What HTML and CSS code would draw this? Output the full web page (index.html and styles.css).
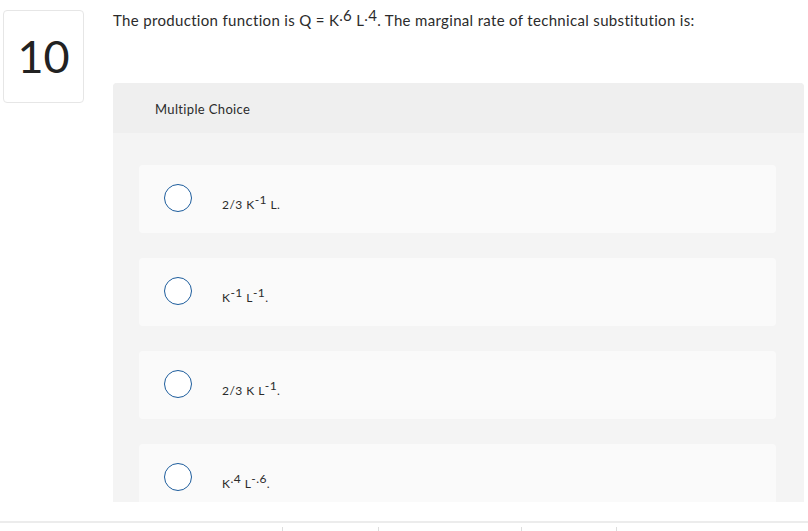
FILE: index.html
```html
<!DOCTYPE html>
<html>
<head>
<meta charset="utf-8">
<link rel="stylesheet" href="styles.css">
</head>
<body>
<div class="page">
  <div class="qnum">10</div>
  <div class="main">
    <p class="question">The production function is Q = K<sup>.6</sup> L<sup>.4</sup>. The marginal rate of technical substitution is:</p>
    <div class="panel">
      <div class="panel-head">Multiple Choice</div>
      <div class="panel-body">
        <div class="option"><span class="radio"></span><span class="opt-text">2/3 K<sup>-1</sup> L.</span></div>
        <div class="option"><span class="radio"></span><span class="opt-text">K<sup>-1</sup> L<sup>-1</sup>.</span></div>
        <div class="option"><span class="radio"></span><span class="opt-text">2/3 K L<sup>-1</sup>.</span></div>
        <div class="option"><span class="radio"></span><span class="opt-text">K<sup>.4</sup> L<sup>-.6</sup>.</span></div>
      </div>
    </div>
  </div>
</div>
<div class="footer">
  <span class="tick t1"></span>
  <span class="tick t2"></span>
  <span class="tick t3"></span>
  <span class="tick t4"></span>
</div>
</body>
</html>
```
FILE: styles.css
```css
html, body {
  margin: 0;
  padding: 0;
  background: #ffffff;
  font-family: Lato, "Open Sans", Arial, sans-serif;
  color: #222222;
  overflow: hidden;
}
.page {
  display: flex;
  align-items: flex-start;
  height: 502px;
  overflow: hidden;
}
.qnum {
  box-sizing: border-box;
  width: 81px;
  height: 93px;
  margin: 10px 0 0 3px;
  border: 1px solid #e6e6e6;
  border-radius: 4px;
  display: flex;
  align-items: center;
  justify-content: center;
  font-size: 45px;
  color: #222;
  padding-bottom: 2px;
}
.main {
  margin-left: 29px;
  width: 691px;
}
.question {
  margin: 0;
  padding-top: 9px;
  font-size: 15px;
  letter-spacing: 0.33px;
  line-height: 22px;
  color: #2b2b2b;
  white-space: nowrap;
}
.question sup {
  font-size: 15px;
  line-height: 0;
  vertical-align: 5px;
}
.panel {
  margin-top: 52px;
  background: #f4f4f4;
  border-radius: 4px 4px 0 0;
  height: 419px;
  overflow: hidden;
}
.panel-head {
  background: #efefef;
  height: 50px;
  box-sizing: border-box;
  padding-left: 42px;
  display: flex;
  align-items: center;
  font-size: 13px;
  letter-spacing: 0.35px;
  color: #2b2b2b;
  padding-top: 1px;
}
.panel-body {
  padding: 32px 28px 0 26px;
  display: flex;
  flex-direction: column;
  gap: 25px;
}
.option {
  background: #fafafa;
  border-radius: 4px;
  height: 68px;
  flex: none;
  display: flex;
  align-items: center;
  padding-left: 25px;
}
.radio {
  box-sizing: border-box;
  width: 28px;
  height: 28px;
  border: 1.5px solid #1c5c9c;
  border-radius: 50%;
  background: #ffffff;
  margin-top: -2px;
  flex: none;
}
.opt-text {
  margin-left: 30px;
  font-size: 12px;
  letter-spacing: 0.45px;
  color: #2b2b2b;
  padding-top: 11px;
}
.opt-text sup {
  font-size: 12px;
  line-height: 0;
  vertical-align: 5px;
}
.footer {
  position: relative;
  height: 29px;
  margin-top: 19px;
  border-top: 2px solid #ececec;
}
.tick {
  position: absolute;
  top: 4px;
  width: 1px;
  height: 5px;
  background: #dddddd;
}
.t1 { left: 282px; }
.t2 { left: 378px; }
.t3 { left: 521px; }
.t4 { left: 616px; }
```
